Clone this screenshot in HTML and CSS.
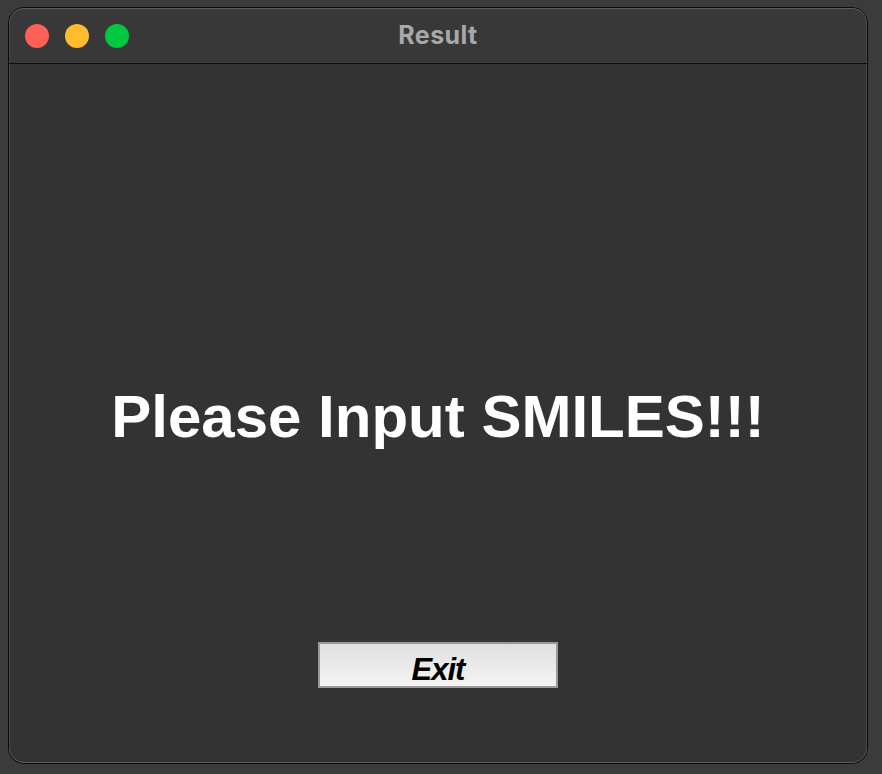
FILE: index.html
```html
<!DOCTYPE html>
<html>
<head>
<meta charset="utf-8">
<link rel="stylesheet" href="styles.css">
</head>
<body>
<div class="window">
  <div class="titlebar">
    <div class="lights">
      <span class="light red"></span>
      <span class="light yellow"></span>
      <span class="light green"></span>
    </div>
    <div class="title">Result</div>
  </div>
  <div class="content">
    <h1 class="message">Please Input SMILES!!!</h1>
    <button class="exit">Exit</button>
  </div>
</div>
</body>
</html>
```
FILE: styles.css
```css
html, body {
  margin: 0;
  padding: 0;
  background: #3b3b3b;
  width: 882px;
  height: 774px;
  overflow: hidden;
}
body {
  padding: 7px 0 0 8px;
  box-sizing: border-box;
  font-family: "Liberation Sans", Arial, sans-serif;
}
.window {
  width: 860px;
  height: 757px;
  box-sizing: border-box;
  border: 1px solid #0a0a0a;
  border-radius: 16px;
  background: #333333;
  box-shadow: inset 0 0 0 1px #5e5e5e;
  overflow: hidden;
  display: flex;
  flex-direction: column;
}
.titlebar {
  height: 56px;
  flex: none;
  box-sizing: border-box;
  background: #383838;
  border-bottom: 1px solid #0d0d0d;
  box-shadow: inset 0 1px 0 #5e5e5e, inset 1px 0 0 #4a4a4a, inset -1px 0 0 #4a4a4a;
  border-radius: 15px 15px 0 0;
  position: relative;
  display: flex;
  align-items: center;
  justify-content: center;
}
.lights {
  position: absolute;
  left: 16px;
  top: 16px;
  display: flex;
  gap: 16px;
}
.light {
  width: 24px;
  height: 24px;
  border-radius: 50%;
  display: block;
}
.red { background: #fe5f57; }
.yellow { background: #febc2e; }
.green { background: #00c841; }
.title {
  color: #a8a8a8;
  font-family: Inter, "Liberation Sans", sans-serif;
  font-weight: 700;
  font-size: 25px;
  letter-spacing: 0.4px;
  margin-top: -2px;
}
.content {
  flex: 1;
  display: flex;
  flex-direction: column;
  align-items: center;
  box-shadow: inset 1px 0 0 #4a4a4a, inset -1px 0 0 #4a4a4a, inset 0 -1px 0 #5e5e5e;
}
.message {
  margin: 323px 0 0;
  font-size: 60px;
  line-height: 60px;
  font-weight: 700;
  color: #ffffff;
}
.exit {
  margin-top: 195px;
  width: 240px;
  height: 46px;
  box-sizing: border-box;
  border: 2px solid #9a9a9a;
  background: linear-gradient(#e0e0e0, #f4f4f4);
  font-family: "Liberation Sans", Arial, sans-serif;
  font-weight: 700;
  font-style: italic;
  font-size: 31px;
  letter-spacing: -1px;
  line-height: 36px;
  color: #000;
  padding: 8px 0 0;
}
```
